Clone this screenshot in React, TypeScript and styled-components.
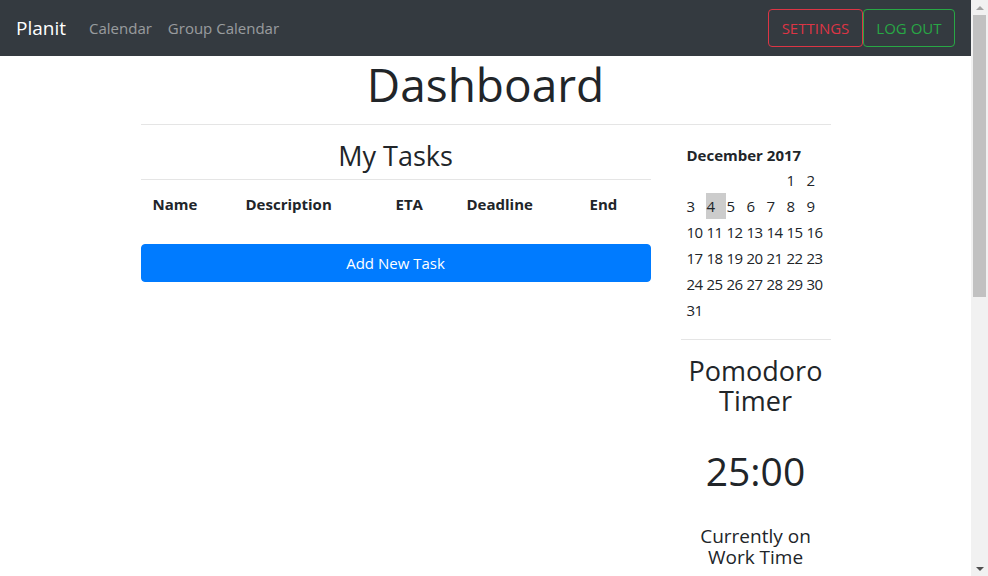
import React from "react";
import styled, { createGlobalStyle } from "styled-components";

const Global = createGlobalStyle`
  html, body { margin: 0; padding: 0; }
  body {
    font-family: "Open Sans", "Noto Sans", sans-serif;
    font-size: 16px;
    line-height: 1.5;
    color: #212529;
    background: #fff;
    overflow-x: hidden;
  }
  * { box-sizing: border-box; }
`;

const Page = styled.div`
  width: 971px;
  min-height: 1107px;
`;

const Scrollbar = styled.div`
  position: fixed;
  top: 0;
  right: 0;
  width: 17px;
  height: 100vh;
  background: #f1f1f1;
  display: flex;
  flex-direction: column;
  align-items: center;
`;

const ScrollArrow = styled.div<{ $down?: boolean }>`
  height: 15px;
  width: 17px;
  display: flex;
  align-items: center;
  justify-content: center;
  margin-top: ${(p) => (p.$down ? "auto" : "0")};
  &::before {
    content: "";
    border-left: 4px solid transparent;
    border-right: 4px solid transparent;
    ${(p) =>
      p.$down
        ? "border-top: 4px solid #505050;"
        : "border-bottom: 4px solid #a3a3a3;"}
  }
`;

const ScrollThumb = styled.div`
  width: 13px;
  height: 282px;
  background: #c1c1c1;
`;

const Navbar = styled.nav`
  height: 56px;
  background: #343a40;
  display: flex;
  align-items: center;
  padding: 0 16px;
`;

const Brand = styled.a`
  color: #fff;
  font-size: 19px;
  margin-right: 15px;
  text-decoration: none;
`;

const NavLink = styled.a`
  color: rgba(255, 255, 255, 0.5);
  font-size: 15px;
  padding: 0 8px;
  text-decoration: none;
`;

const NavRight = styled.div`
  margin-left: auto;
  display: flex;
`;

const OutlineButton = styled.button<{ $color: string }>`
  font-family: inherit;
  font-size: 15px;
  height: 38px;
  padding: 0 12.5px;
  background: transparent;
  color: ${(p) => p.$color};
  border: 1px solid ${(p) => p.$color};
  border-radius: 4px;
  text-transform: uppercase;
`;

const Container = styled.main`
  width: 720px;
  margin: 0 auto;
  padding: 0 15px;
`;

const Title = styled.h1`
  margin: 0;
  font-size: 46px;
  font-weight: 500;
  line-height: 56px;
  text-align: center;
`;

const Rule = styled.hr<{ $mt?: number; $mb?: number }>`
  border: 0;
  border-top: 1px solid rgba(0, 0, 0, 0.1);
  margin: ${(p) => p.$mt ?? 0}px 0 ${(p) => p.$mb ?? 0}px;
`;

const Row = styled.div`
  display: grid;
  grid-template-columns: 510px 150px;
  column-gap: 30px;
`;

const Column = styled.section``;

const SectionTitle = styled.h2`
  margin: 11px 0 0;
  font-size: 27px;
  font-weight: 500;
  line-height: 40px;
  text-align: center;
`;

const TaskTable = styled.table`
  width: 100%;
  border-collapse: collapse;
  margin-bottom: 17px;
`;

const Th = styled.th`
  text-align: left;
  font-size: 15px;
  font-weight: 700;
  padding: 12px 12px 11px;
  line-height: 24px;
`;

const PrimaryButton = styled.button`
  display: block;
  width: 100%;
  height: 38px;
  background: #007bff;
  color: #fff;
  border: 1px solid #007bff;
  border-radius: 4px;
  font-family: inherit;
  font-size: 15px;
`;

const Month = styled.div`
  margin: 17px 0 0 6px;
  font-weight: 700;
  font-size: 15px;
  line-height: 26px;
`;

const CalGrid = styled.div`
  display: grid;
  grid-template-columns: repeat(7, 20px);
  grid-auto-rows: 26px;
  margin-left: 5px;
  margin-bottom: 16px;
  margin-top: -1px;
`;

const Day = styled.div<{ $today?: boolean }>`
  font-size: 15px;
  line-height: 26px;
  padding-left: 1px;
  letter-spacing: -0.5px;
  background: ${(p) => (p.$today ? "#cccccc" : "transparent")};
`;

const TimerTitle = styled.h4`
  margin: 16px 0 0;
  font-size: 27px;
  font-weight: 500;
  line-height: 30px;
  text-align: center;
`;

const Clock = styled.div`
  margin-top: 31px;
  font-size: 39px;
  font-weight: 500;
  line-height: 48px;
  text-align: center;
`;

const Status = styled.h5`
  margin: 31px 0 0;
  font-size: 19px;
  font-weight: 500;
  line-height: 21px;
  text-align: center;
`;

const headers = ["Name", "Description", "ETA", "Deadline", "End"];
const widths = [93, 150, 71, 123, 73];

const days: (number | null)[] = [null, null, null, null, null];
for (let d = 1; d <= 31; d++) days.push(d);

export default function App() {
  return (
    <Page>
      <Global />
      <Navbar>
        <Brand href="#">Planit</Brand>
        <NavLink href="#">Calendar</NavLink>
        <NavLink href="#">Group Calendar</NavLink>
        <NavRight>
          <OutlineButton $color="#dc3545">Settings</OutlineButton>
          <OutlineButton $color="#28a745">Log out</OutlineButton>
        </NavRight>
      </Navbar>
      <Container>
        <Title>Dashboard</Title>
        <Rule $mt={12} />
        <Row>
          <Column>
            <SectionTitle>My Tasks</SectionTitle>
            <Rule $mt={3} />
            <TaskTable>
              <thead>
                <tr>
                  {headers.map((h, i) => (
                    <Th key={h} style={{ width: widths[i] }}>
                      {h}
                    </Th>
                  ))}
                </tr>
              </thead>
            </TaskTable>
            <PrimaryButton>Add New Task</PrimaryButton>
          </Column>
          <Column>
            <Month>December 2017</Month>
            <CalGrid>
              {days.map((d, i) => (
                <Day key={i} $today={d === 4}>
                  {d ?? ""}
                </Day>
              ))}
            </CalGrid>
            <Rule />
            <TimerTitle>
              Pomodoro
              <br />
              Timer
            </TimerTitle>
            <Clock>25:00</Clock>
            <Status>
              Currently on
              <br />
              Work Time
            </Status>
          </Column>
        </Row>
      </Container>
      <Scrollbar>
        <ScrollArrow />
        <ScrollThumb />
        <ScrollArrow $down />
      </Scrollbar>
    </Page>
  );
}
